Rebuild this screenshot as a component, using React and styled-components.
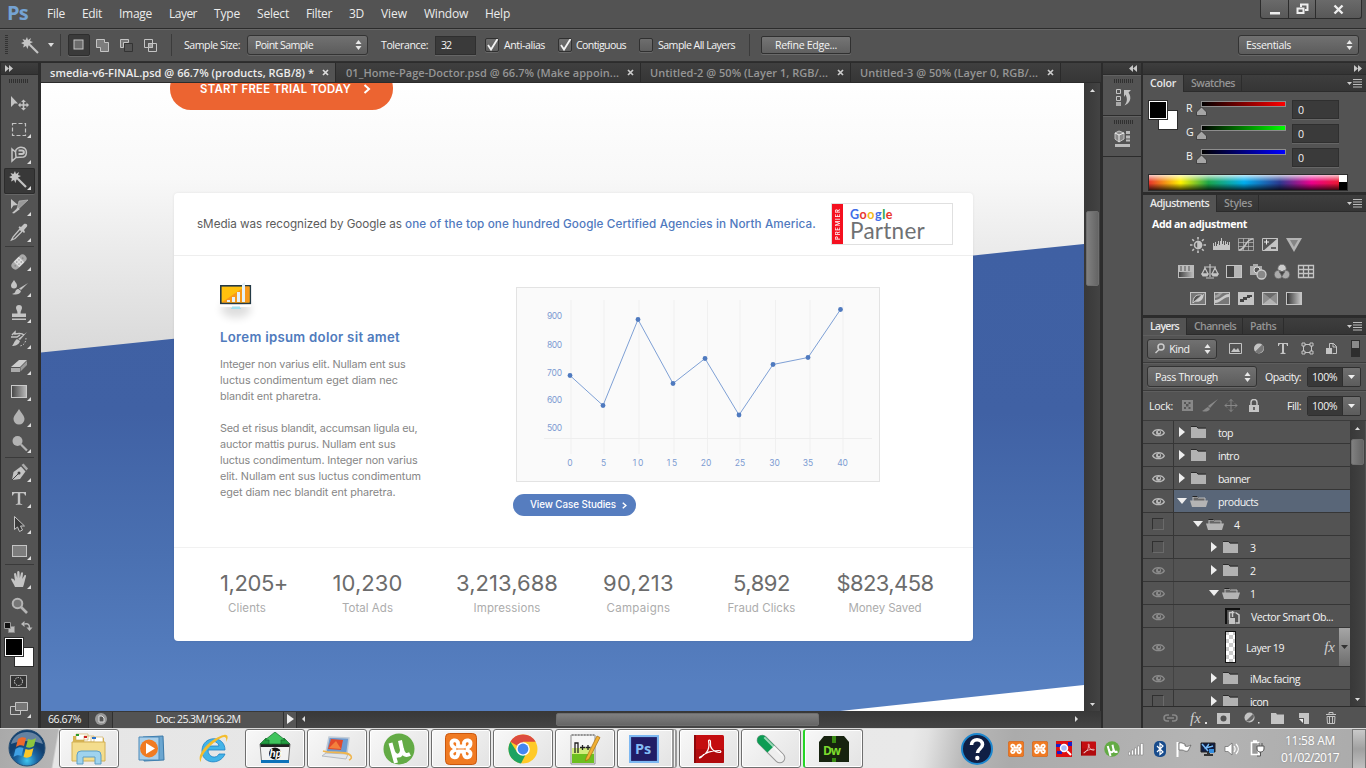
import React, { useLayoutEffect, useRef, useState } from "react";
import styled, { createGlobalStyle, css } from "styled-components";

const Global = createGlobalStyle`
  * { box-sizing: border-box; }
  body { margin: 0; background: #3a3a3a; }
  svg { display: block; flex: none; }
`;

const ui = `"Open Sans", "Noto Sans", sans-serif`;
const geo = `Inter, Lato, sans-serif`;

/* Text tracked so that it fills a given width exactly. */
const Tracked = styled.span`
  display: inline-block;
  flex: none;
  white-space: pre;
  width: ${(p) => p.$w}px;
`;
function Fit({ w, children, ...rest }) {
  const ref = useRef(null);
  const [space, setSpace] = useState(0);
  useLayoutEffect(() => {
    const range = document.createRange();
    range.selectNodeContents(ref.current);
    const natural = range.getBoundingClientRect().width;
    setSpace((w - natural) / ref.current.textContent.length);
  }, [w]);
  return (
    <Tracked ref={ref} $w={w} style={{ letterSpacing: `${space}px` }} {...rest}>
      {children}
    </Tracked>
  );
}

/* ---------- shell ---------- */
const Screen = styled.div`
  width: 1366px;
  height: 768px;
  overflow: hidden;
  display: flex;
  flex-direction: column;
  background: #535353;
  color: #f4f4f4;
  font: 10.6px/14px ${ui};
`;
const MenuBar = styled.header`
  height: 28px;
  flex: none;
  display: flex;
  align-items: center;
  background: #535353;
  padding: 0 4px 0 7px;
  font-size: 12px;
  color: #ececec;
`;
const Logo = styled.div`
  width: 40px;
  font: bold 20px/26px ${ui};
  color: #75a3d3;
  padding-bottom: 2px;
`;
const Menus = styled.nav`
  display: flex;
  gap: 17px;
  flex: 1;
`;
const WindowButtons = styled.div`
  display: flex;
  align-self: flex-start;
  height: 19px;
  border: 1px solid #2c2c2c;
  border-top: 0;
  border-radius: 0 0 3px 3px;
  background: linear-gradient(#6a6a6a, #585858);
`;
const WindowButton = styled.div`
  width: ${(p) => p.$w}px;
  display: flex;
  justify-content: center;
  align-items: center;
  & + & { border-left: 1px solid #2c2c2c; }
`;
const OptionsBar = styled.div`
  height: 34px;
  flex: none;
  display: flex;
  align-items: center;
  border-top: 1px solid #2c2c2c;
  border-bottom: 1px solid #303030;
  box-shadow: inset 0 1px #666;
  padding-left: 5px;
`;
const Gap = styled.i`
  width: ${(p) => p.$w}px;
  flex: none;
`;
const VRule = styled.i`
  width: 1px;
  height: 22px;
  background: #3b3b3b;
  flex: none;
`;
const Selected = styled.div`
  width: 22px;
  height: 22px;
  border-radius: 2px;
  border: 1px solid #2e2e2e;
  background: #3a3a3a;
  box-shadow: 0 1px #686868;
  display: flex;
  align-items: center;
  justify-content: center;
`;
const Select = styled.div`
  width: ${(p) => p.$w}px;
  height: ${(p) => p.$h || 20}px;
  flex: none;
  border: 1px solid #333;
  border-radius: 3px;
  box-shadow: 0 1px #666;
  background: linear-gradient(#717171, #5c5c5c);
  display: flex;
  align-items: center;
  justify-content: space-between;
  padding: 0 5px 0 7px;
`;
const Field = styled.div`
  width: ${(p) => p.$w}px;
  height: ${(p) => p.$h || 19}px;
  flex: none;
  background: #3a3a3a;
  border: 1px solid #2f2f2f;
  box-shadow: 0 1px #666;
  display: flex;
  align-items: center;
  padding-left: 5px;
`;
const CheckBox = styled.div`
  width: 14px;
  height: 14px;
  flex: none;
  border: 1px solid #303030;
  border-radius: 2px;
  background: linear-gradient(#6e6e6e, #5e5e5e);
  box-shadow: 0 1px #686868;
`;
const PushButton = styled.div`
  width: 90px;
  height: 18px;
  border: 1px solid #303030;
  border-radius: 2px;
  background: linear-gradient(#757575, #606060);
  box-shadow: 0 1px #6a6a6a;
  display: flex;
  align-items: center;
  justify-content: center;
`;
const Work = styled.main`
  height: 666px;
  flex: none;
  display: flex;
  background: #2c2c2c;
`;

/* ---------- tools ---------- */
const Tools = styled.aside`
  width: 38px;
  margin: 0 3px 0 0;
  border-left: 1px solid #2c2c2c;
  background: #535353;
  display: flex;
  flex-direction: column;
  align-items: center;
`;
const DarkStrip = styled.div`
  height: 13px;
  width: 100%;
  flex: none;
  background: linear-gradient(#3e3e3e, #343434);
  border-bottom: 1px solid #2c2c2c;
  border-top: 1px solid #2c2c2c;
  display: flex;
  align-items: center;
  padding: 0 4px;
  justify-content: ${(p) => (p.$end ? "flex-end" : "flex-start")};
`;
const Grip = styled.div`
  width: 20px;
  height: 4px;
  flex: none;
  margin: ${(p) => p.$m};
  background: repeating-linear-gradient(90deg, #303030 0 1px, #535353 1px 2px);
`;
const Slot = styled.div`
  width: 31px;
  height: 26px;
  flex: none;
  padding-left: 2px;
  border-radius: 2px;
  ${(p) => p.$on && css`background: #383838; box-shadow: inset 0 0 0 1px #2c2c2c, 0 1px #666;`}
`;
const Sep = styled.div`
  width: 29px;
  height: 3px;
  flex: none;
  border-top: 1px solid #3a3a3a;
`;
const SwatchPair = styled.div`
  position: relative;
  width: ${(p) => p.$s}px;
  height: ${(p) => p.$s}px;
  flex: none;
  margin-left: ${(p) => p.$ml || 0}px;
`;
const Swatch = styled.i`
  position: absolute;
  width: 20px;
  height: 20px;
  border: 1px solid #2c2c2c;
  background: ${(p) => p.$c};
  ${(p) => (p.$front ? "left:0;top:0;box-shadow: inset 0 0 0 1px #fff;" : "right:0;bottom:0;")}
`;

/* ---------- document ---------- */
const Doc = styled.section`
  width: 1060px;
  flex: none;
  display: flex;
  flex-direction: column;
`;
const Tabs = styled.div`
  height: 21px;
  flex: none;
  display: flex;
  border-top: 1px solid #2c2c2c;
  background: linear-gradient(#3f3f3f, #363636);
  border-bottom: 1px solid #2c2c2c;
  font-size: 11px;
`;
const Tab = styled.div`
  width: ${(p) => p.$w}px;
  border-right: 1px solid #2a2a2a;
  padding: 0 6px 0 ${(p) => p.$pl || 9}px;
  display: flex;
  align-items: center;
  justify-content: space-between;
  font-weight: 600;
  background: ${(p) => (p.$on ? "#535353" : "transparent")};
  color: ${(p) => (p.$on ? "#ececec" : "#959595")};
`;
const View = styled.div`
  display: flex;
  height: 628px;
  flex: none;
`;
const Canvas = styled.div`
  width: 1043px;
  flex: none;
  overflow: hidden;
  display: grid;
  background: linear-gradient(#fff 0, #f8f8f8 95px, #ececec 160px, #d9d9d9 270px, #fff 271px);
  & > * { grid-area: 1 / 1; }
`;
const BlueBand = styled.div`
  height: 628px;
  clip-path: polygon(0 269.5px, 1043px 161px, 1043px 602px, 799px 628px, 0 628px);
  background: linear-gradient(#3e5fa2 0, #4061a4 330px, #4a70b1 470px, #567fc0 600px);
`;
const Page = styled.div`
  height: 628px;
  min-width: 0;
  z-index: 1;
  font-family: ${geo};
`;
const Trial = styled.div`
  width: 223px;
  height: 43px;
  margin: -16px 0 83px 129px;
  border-radius: 21px;
  background: #ec6431;
  color: #fff;
  font-size: 11.3px;
  font-weight: 600;
  display: flex;
  align-items: center;
  padding-left: 30px;
  gap: 11px;
`;
const Card = styled.article`
  width: 799px;
  height: 448px;
  margin-left: 133px;
  border-radius: 4px;
  background: #fff;
  box-shadow: 0 0 3px rgba(0, 0, 0, 0.08);
`;
const CardHead = styled.div`
  height: 63px;
  border-bottom: 1px solid #eee;
  display: flex;
  align-items: center;
  padding: 0 20px 0 23px;
  font-size: 11.7px;
  color: #5c5c5c;
`;
const Claim = styled.strong`
  font-weight: 500;
  color: #5079be;
`;
const Partner = styled.div`
  width: 122px;
  height: 42px;
  margin-left: auto;
  border: 1px solid #e0e0e0;
  display: flex;
`;
const Premier = styled.div`
  width: 11px;
  height: 40px;
  background: #f5101f;
  color: #fff;
  font: 500 6px/11px ${geo};
  letter-spacing: 0.8px;
  writing-mode: vertical-rl;
  transform: rotate(180deg);
  text-align: center;
`;
const PartnerText = styled.div`
  padding: 4px 0 0 7px;
  display: flex;
  flex-direction: column;
`;
const Google = styled.div`
  font: 700 12.5px/14px Lato, sans-serif;
  height: 13px;
`;
const Hue = styled.i`
  font-style: normal;
  color: ${(p) => p.$c};
`;
const PartnerWord = styled.div`
  font: 400 22.5px/20px Lato, sans-serif;
  color: #6f7173;
`;
const CardBody = styled.div`
  height: 291px;
  display: flex;
  padding: 29px 0 0 46px;
`;
const Copy = styled.div`
  width: 293px;
`;
const Title = styled.h2`
  margin: 13px 0 11px;
  font: 600 13.2px/18px ${geo};
  color: #4f7bbd;
`;
const Line = styled.div`
  height: 16px;
  font: 400 10.8px/16px ${geo};
  color: #868686;
`;
const ChartColumn = styled.div`
  padding: 2px 0 0 3px;
`;
const CaseButton = styled.div`
  width: 123px;
  height: 22px;
  margin: 12px 0 0 -3px;
  border-radius: 11px;
  background: #567dbf;
  color: #fff;
  font-size: 9.8px;
  font-weight: 500;
  display: flex;
  align-items: center;
  padding-left: 17px;
  gap: 5px;
`;
const Stats = styled.div`
  height: 94px;
  border-top: 1px solid #f1f1f1;
  display: flex;
  padding: 22px 0 0 19px;
`;
const Stat = styled.div`
  width: ${(p) => p.$w}px;
  display: flex;
  flex-direction: column;
  align-items: center;
`;
const Figure = styled.div`
  font: 400 22px/26px ${geo};
  color: #6c6c6c;
  padding-left: ${(p) => p.$shift || 0}px;
`;
const Caption = styled.div`
  font: 400 11.5px/24px ${geo};
  color: #acacac;
  padding-right: ${(p) => p.$shift || 0}px;
`;
const ScrollY = styled.div`
  width: ${(p) => p.$w || 16}px;
  flex: none;
  background: linear-gradient(90deg, #383838, #434343);
  display: flex;
  flex-direction: column;
  align-items: center;
`;
const Thumb = styled.i`
  width: ${(p) => p.$w}px;
  height: ${(p) => p.$h}px;
  flex: none;
  margin: ${(p) => p.$m};
  border-radius: 2px;
  border: 1px solid #6e6e6e;
  background: linear-gradient(${(p) => (p.$flat ? "180deg" : "90deg")}, #808080, #656565);
`;
const Status = styled.div`
  height: 17px;
  flex: none;
  display: flex;
  align-items: center;
  background: linear-gradient(#383838, #444);
`;
const StatusCell = styled.div`
  width: ${(p) => p.$w}px;
  height: 16px;
  padding-bottom: 1px;
  background: ${(p) => p.$bg};
  border-right: 1px solid #303030;
  display: flex;
  align-items: center;
  justify-content: center;
`;

/* ---------- right side ---------- */
const Dock = styled.aside`
  width: 38px;
  margin: 0 2px;
  background: #535353;
  flex: none;
`;
const DockGroup = styled.div`
  height: 41px;
  border-bottom: 1px solid #2c2c2c;
  box-shadow: inset 0 1px #626262;
  padding: 4px 0 0 9px;
`;
const Panels = styled.aside`
  width: 223px;
  flex: none;
  display: flex;
  flex-direction: column;
`;
const Panel = styled.section`
  height: ${(p) => p.$h}px;
  flex: none;
  margin-bottom: 3px;
  background: #535353;
  display: flex;
  flex-direction: column;
  overflow: hidden;
`;
const PanelTabs = styled.div`
  height: 17px;
  flex: none;
  display: flex;
  background: linear-gradient(#3e3e3e, #353535);
  border-bottom: 1px solid #2c2c2c;
`;
const PanelTab = styled.div`
  width: ${(p) => p.$w}px;
  height: ${(p) => (p.$on ? 17 : 16)}px;
  padding: 1px 0 0 7px;
  font-weight: 600;
  line-height: 14px;
  border-right: 1px solid #2c2c2c;
  background: ${(p) => (p.$on ? "#535353" : "transparent")};
  color: ${(p) => (p.$on ? "#e8e8e8" : "#949494")};
`;
const TabsEnd = styled.div`
  margin-left: auto;
  padding: 4px 4px 0 0;
`;
const ColorBody = styled.div`
  padding: 8px 0 0 5px;
  display: flex;
  height: 82px;
`;
const Channels = styled.div`
  padding-left: 8px;
`;
const Channel = styled.div`
  height: 24px;
  display: flex;
`;
const ChannelName = styled.div`
  width: 10px;
  padding-top: 1px;
`;
const Slider = styled.div`
  width: 90px;
`;
const Track = styled.div`
  height: 6px;
  margin: 1px 0 0 5px;
  width: 85px;
  border: 1px solid #8d8d8d;
  background: linear-gradient(90deg, #000, ${(p) => p.$c});
`;
const Spectrum = styled.div`
  margin-left: 5px;
  width: 200px;
  height: 17px;
  border: 1px solid #2c2c2c;
  display: flex;
  background: linear-gradient(rgba(255,255,255,.75), rgba(255,255,255,0) 45%, rgba(0,0,0,0) 55%, rgba(0,0,0,.75)),
    linear-gradient(90deg, #e8352c 0, #fff200 16%, #1ca64a 30%, #00aeef 48%, #2b3990 66%, #ec008c 82%, #ed1c24 98%);
`;
const BlackWhite = styled.i`
  width: 8px;
  margin-left: auto;
  background: linear-gradient(#fff 50%, #000 50%);
`;
const AdjustTitle = styled.div`
  padding: 5px 0 0 9px;
  height: 19px;
  flex: none;
  font-weight: 700;
  color: #fff;
`;
const IconRow = styled.div`
  display: flex;
  gap: 6px;
  height: 27px;
  flex: none;
  align-items: center;
  padding-left: ${(p) => p.$pl}px;
`;
const ControlRow = styled.div`
  height: ${(p) => p.$h}px;
  flex: none;
  display: flex;
  align-items: center;
  padding-left: ${(p) => p.$pl || 4}px;
  border-bottom: 1px solid #3b3b3b;
  box-shadow: inset 0 1px #5e5e5e;
`;
const Percent = styled.div`
  display: flex;
  width: 54px;
  height: 20px;
  border: 1px solid #2f2f2f;
  border-radius: 2px;
  overflow: hidden;
`;
const PercentValue = styled.div`
  width: 34px;
  background: #383838;
  padding: 2px 0 0 4px;
`;
const PercentDrop = styled.div`
  flex: 1;
  background: linear-gradient(#707070, #5c5c5c);
  border-left: 1px solid #2f2f2f;
  display: flex;
  align-items: center;
  justify-content: center;
`;
const LayerArea = styled.div`
  display: flex;
  height: 286px;
  flex: none;
  overflow: hidden;
  border-bottom: 1px solid #2c2c2c;
`;
const LayerList = styled.div`
  width: 207px;
  flex: none;
`;
const LayerRow = styled.div`
  height: ${(p) => p.$h || 23}px;
  display: flex;
  border-bottom: 1px solid #363636;
`;
const EyeCell = styled.div`
  width: 31px;
  border-right: 1px solid #363636;
  padding-left: 9px;
  display: flex;
  align-items: center;
  flex: none;
  opacity: ${(p) => (p.$dim ? 0.55 : 1)};
`;
const EyeBox = styled.i`
  width: 12px;
  height: 12px;
  border: 1px solid #6a6a6a;
  border-top-color: #303030;
  border-left-color: #303030;
`;
const LayerCell = styled.div`
  flex: 1;
  display: flex;
  align-items: center;
  padding-left: ${(p) => p.$pl}px;
  background: ${(p) => (p.$on ? "#596678" : "transparent")};
  color: #f4f4f4;
`;
const LayerName = styled.div`
  padding: 2px 0 0 ${(p) => p.$pl}px;
  flex: 1;
`;
const Fx = styled.i`
  font: italic 15px/18px "Liberation Serif", serif;
  color: #cfcfcf;
  padding-right: 4px;
`;
const FxDrop = styled.div`
  width: 11px;
  align-self: stretch;
  background: linear-gradient(#a5a5a5, #6e6e6e);
  display: flex;
  align-items: center;
  justify-content: center;
`;
const PanelFoot = styled.div`
  height: 21px;
  flex: none;
  display: flex;
  align-items: center;
  padding: 1px 0 0 20px;
`;
const FootIcon = styled.div`
  width: 27px;
  display: flex;
`;

/* ---------- taskbar ---------- */
const TaskBar = styled.footer`
  height: 40px;
  flex: none;
  display: flex;
  border-top: 1px solid #d9d9d9;
  background: linear-gradient(100deg, #a9a9a9 0, #b5b5b5 57px, #e6e6e6 59px, #e9e9e9 900px, #e2e2e2 915px, #b7b7b7 955px, #ababab 1000px, #b4b4b4 1180px, #aaaaaa 1366px);
`;
const Start = styled.div`
  width: 59px;
  padding: 0 0 0 8px;
`;
const Task = styled.div`
  width: 60px;
  height: 39px;
  margin-right: 2px;
  flex: none;
  display: flex;
  align-items: center;
  justify-content: center;
  border-radius: 3px;
  border: 1px solid transparent;
  ${(p) => p.$open && css`
    border-color: #6f6f6f;
    background: linear-gradient(135deg, #f8f8f8, #e3e3e3);
    box-shadow: inset 0 0 0 1px #fff;
  `}
  ${(p) => p.$stack && css`border-right: 5px double #999; padding-right: 2px;`}
  ${(p) => p.$busy && css`border-left: 2px solid #26d626;`}
`;
const Tray = styled.div`
  margin-left: auto;
  display: flex;
  align-items: center;
  height: 39px;
`;
const TrayIcon = styled.div`
  width: 24px;
  display: flex;
  justify-content: center;
`;
const Clock = styled.div`
  width: 84px;
  display: flex;
  flex-direction: column;
  align-items: center;
  font: 12px/17px ${ui};
  color: #fff;
  text-shadow: 0 0 2px #888;
`;
const ShowDesktop = styled.div`
  width: 14px;
  height: 40px;
  border: 1px solid #777;
  background: linear-gradient(#c9c9c9, #a0a0a0 50%, #c0c0c0);
`;

/* ---------- small drawings ---------- */
const G = "#c4c4c4";
const Spin = () => (
  <svg width="7" height="10" fill="#e8e8e8"><path d="M3.5 0L6.5 4H.5zM3.5 10L.5 6h6z" /></svg>
);
const Down = ({ c = "#eee" }) => (
  <svg width="7" height="4" fill={c}><path d="M0 0h7L3.5 4z" /></svg>
);
const Close = ({ c }) => (
  <svg width="7" height="7" stroke={c} strokeWidth="1.7"><path d="M1 1l5 5M6 1L1 6" /></svg>
);
const Chevrons = ({ left }) => (
  <svg width="8" height="7" fill="#c8c8c8">
    <path d={left ? "M4 0v7L0 3.5zM8 0v7L4 3.5z" : "M0 0v7l4-3.5zM4 0v7l4-3.5z"} />
  </svg>
);
const Next = ({ s, w }) => (
  <svg width={s} height={s} viewBox="0 0 8 8" fill="none" stroke="#fff" strokeWidth={w}><path d="M2 .8L5.6 4 2 7.2" /></svg>
);
const PanelMenu = () => (
  <svg width="15" height="9"><path d="M0 3h5L2.500 6z" fill="#ccc" /><path d="M6 .5h9M6 3h9M6 5.500h9M6 8h9" stroke="#bbb" /></svg>
);
const Eye = () => (
  <svg width="13" height="9" viewBox="0 0 13 9">
    <path d="M.7 4.800C3 .6 10 .6 12.300 4.800 10 8.600 3 8.600 .7 4.800z" fill="none" stroke="#b9b9b9" strokeWidth="1.300" />
    <circle cx="6.500" cy="4.500" r="2.500" fill="#b9b9b9" /><circle cx="7" cy="4" r="1" fill="#444" />
  </svg>
);
const Folder = ({ open }) =>
  open ? (
    <svg width="18" height="13"><path d="M3 6V2h4l1 1h7v3" fill="#666" stroke="#bdbdbd" /><path d="M0 5.500h18l-2 6.500H2z" fill="#b4b4b4" /><path d="M2.500 1.500H7l1 1" stroke="#222" fill="none" /></svg>
  ) : (
    <svg width="15" height="13"><path d="M0 1h5.500l1.500 1.500h8V12H0z" fill="#b2b2b2" /><path d="M0 .5h5.500L7 2h8" stroke="#2a2a2a" fill="none" /></svg>
  );
const Twist = ({ open }) => (
  <svg width="10" height="10" fill="#eee"><path d={open ? "M0 2h10L5 8z" : "M2 0v10l6-5z"} /></svg>
);

const Wand = () => (
  <g>
    <path d="M9 3l1 3 3-2-1 3 3 1-3 1.500 1.500 2.500-3-.5L9.500 15 8 12l-3 1.500 1-3-3-1.500 3-1.200L4.500 5l3 1z" fill={G} />
    <path d="M12 11l8 8" stroke={G} strokeWidth="2.200" />
  </g>
);
const toolArt = {
  move: <g fill={G}><path d="M5 6L12 13.500H8.500L5 17z" /><path d="M17.500 9.500l2.500 2.500h-1.700v2.200h2.200v-1.700l2.500 2.500-2.500 2.500v-1.700h-2.200v2.200H20l-2.500 2.500L15 18h1.700v-2.200h-2.200v1.700L12 15l2.500-2.500v1.700h2.200V12H15z" /></g>,
  marquee: <rect x="6.500" y="7.500" width="13" height="12" fill="none" stroke={G} strokeWidth="1.200" strokeDasharray="4 2" />,
  lasso: <g fill="none" stroke={G} strokeWidth="1.500"><path d="M6 7l3.500 3 .5 5.500-4 3.500zM9.500 10c0-4 4-5 7-4.500 5 .8 5 8 1 9.500l-7.500.5" /><path d="M12.500 8.500h3.500c2.500 0 2.500 3.500 0 3.500h-3.500" strokeWidth="2" /></g>,
  wand: <Wand />,
  slice: <g><path d="M5 5v10l2.500-3.500L12 11z" fill={G} /><path d="M22 6l-9 1-2 8 3-1.500z" fill="#999" stroke={G} strokeWidth=".6" /><path d="M12 13.500L6 19l2 .5 6-4.500z" fill={G} /></g>,
  dropper: <g><path d="M14 9l-7 8-1.500 3L9 18.500l7-7z" fill="none" stroke={G} strokeWidth="1.300" /><path d="M12.500 7.500l5.500 5.500 1-1-1-2 3-3.500c1-2-1-3.500-3-2.500L15 7l-1.500-.7z" fill={G} /></g>,
  heal: <g transform="rotate(-45 13 13)"><rect x="4" y="9" width="18" height="8" rx="4" fill="#aaa" /><rect x="9.500" y="9" width="7" height="8" fill="#ddd" /><path d="M11.500 11v1m3-1v1m-3 2v1m3-1v1M7 13h1m10 0h1" stroke="#555" /></g>,
  brush: <g><path d="M8 5c2 3 3 4 3 5.500a3 3 0 01-6 0C5 9 6 8 8 5z" fill={G} /><path d="M22 8l-7 7-2-1.500z" fill={G} /><path d="M12.500 14l2.500 2c-1 4-6 4-9 3 2-.5 3-1 3.500-3 .7-1.500 1.700-2 3-2z" fill={G} /></g>,
  stamp: <g fill={G}><path d="M13 4a3 3 0 013 3c0 1.500-1.500 2.500-1.500 5.500H20V16H6v-3.500h5.500C11.500 9.500 10 8.500 10 7a3 3 0 013-3z" /><path d="M6 17.500h14V19H6z" /></g>,
  history: <g><path d="M6 8l3-3v2c5-1 7-1 9 1M5 10h6l3-2" stroke={G} fill="none" strokeWidth="1.500" /><path d="M21 5l-7 8-2-1z" fill={G} /><path d="M11 12l3 2c-1 4-5 5-8 5 2-2 2-5 5-7z" fill={G} /><path d="M20 11c0 5-3 8-7 8" stroke={G} strokeDasharray="1.500 1.500" fill="none" /></g>,
  eraser: <g><path d="M5 14l8-7h8l-7 7z" fill="#ccc" /><path d="M5 15h9v4H5z" fill="#aaa" /><path d="M14.500 14.500L21 8v4l-6.500 6.500z" fill="#999" /></g>,
  gradient: <rect x="5.500" y="6.500" width="15" height="12" fill="url(#toolShade)" stroke="#c9c9c9" />,
  drop: <path d="M13 4c3 5 5.500 7 5.500 10a5.500 5.500 0 01-11 0C7.500 11 10 9 13 4z" fill="#b3b3b3" />,
  dodge: <g><circle cx="11.500" cy="10" r="5" fill="#b3b3b3" /><path d="M15 13.500l6 6" stroke="#b3b3b3" strokeWidth="2.200" /></g>,
  pen: <g><path d="M6 20l1.500-8L15 6.500l4.500 5L14 19z" fill={G} /><path d="M6 20l6.500-6.500" stroke="#444" /><circle cx="13" cy="13" r="1.500" fill="#444" /><path d="M15.500 5l2-1.500 4.500 5-1.500 2z" fill="#aaa" /></g>,
  type: <path d="M6 6h14v3.500h-1c-.4-1.800-1-2.300-3-2.300h-1.800v9.500c0 1 .5 1.300 2 1.300v.8H9.800V18c1.500 0 2-.3 2-1.300V7.200H10c-2 0-2.600.5-3 2.300H6z" fill={G} />,
  arrow: <path d="M8.500 4.500v13l3-2.500 2 4.500 3-1.500-2-4h4z" fill="#3a3a3a" stroke={G} strokeWidth="1" />,
  rect: <rect x="6.500" y="7.500" width="14" height="11" fill="#7d7d7d" stroke="#c4c4c4" />,
  hand: <path d="M9 20c-1-3-3-5-4-8 1-1 2-.5 4 2L8 7c.5-1.500 2-1 2.200 0l1 4V5c.3-1.500 2-1.500 2.300 0l.3 6 1.200-5c.5-1.300 2-1 2 .4l-.7 5.600 2-3.500c.8-1 2-.4 1.700.8-1 3-1.500 7-3 10.700z" fill={G} />,
  zoom: <g><circle cx="11.500" cy="10.500" r="4.800" fill="#777" stroke="#b5b5b5" strokeWidth="2" /><path d="M15 14l6 6" stroke="#b5b5b5" strokeWidth="2.600" /></g>,
};
const Tool = ({ name, plain }) => (
  <Slot $on={name === "wand"}>
    <svg width="29" height="26">
      {toolArt[name]}
      {!plain && <path d="M25 18v4h-4z" fill="#ddd" />}
    </svg>
  </Slot>
);

const adjust = {
  sun: <g stroke={G} fill="none" strokeWidth="1.600"><circle cx="9" cy="9" r="3.500" /><path d="M9 5.500a3.500 3.500 0 010 7z" fill={G} /><path d="M9 1v2.500M9 14.500V17M1 9h2.500M14.500 9H17M3.300 3.300L5 5M13 13l1.700 1.700M14.700 3.300L13 5M5 13l-1.700 1.700" /></g>,
  levels: <path d="M0 14V7h1v3h1V6h1v4h1V8h1V5h1v4h1V5h1V2h1v6h1V5h1v4h1V5h1v3h1V6h1v3h1V6h1v8z" fill={G} />,
  curves: <g fill="none" stroke={G}><path d="M1.500 2.500h15v12h-15zM1.500 6.500h15M1.500 10.500h15M6.500 2.500v12M11.500 2.500v12" opacity=".65" /><path d="M2 14c7 0 6-11 14-11" strokeWidth="1.600" /></g>,
  exposure: <g><path d="M1.500 2.500h15v12h-15z" fill="#555" stroke={G} /><path d="M2 15L17 2v13z" fill={G} /><path d="M3 6h5M5.500 3.500v5" stroke="#eee" /><path d="M10 12h5" stroke="#444" strokeWidth="1.500" /></g>,
  vibrance: <g><path d="M1 2h16L9 16z" fill="#b4b4b4" /><path d="M5 4h8l-4 7z" fill="#858585" /></g>,
  hue: <g><rect x="1" y="2" width="16" height="13" fill="#bbb" /><path d="M4 3v5M8 3v5M12 3v5" stroke="#777" strokeWidth="1.500" /><rect x="2" y="9" width="14" height="5" fill="url(#toolShade)" /></g>,
  balance: <g stroke={G} fill="none" strokeWidth="1.200"><path d="M9 1v13M5 15h8M3 4h12M4 5l-3 6h6zM14 5l-3 6h6z" /><path d="M1 11h6l-1 2H2zM11 11h6l-1 2h-4z" fill={G} /></g>,
  bw: <g><rect x="1.500" y="2.500" width="15" height="12" fill="#444" stroke={G} /><path d="M9 3h7v11H9z" fill="#b5b5b5" /></g>,
  photo: <g><path d="M1 3h3V1h5v2h4v9H1z" fill="#aaa" /><circle cx="8" cy="7" r="3" fill="#555" stroke="#ddd" /><circle cx="12.500" cy="11.500" r="4.500" fill="#888" stroke="#ccc" strokeWidth="1.300" /></g>,
  mixer: <g stroke="#666" strokeWidth=".8"><circle cx="9" cy="5.500" r="4.200" fill="#ccc" /><circle cx="5.500" cy="11.500" r="4.200" fill="#aaa" /><circle cx="12.500" cy="11.500" r="4.200" fill="#aaa" /><path d="M6 8.500h6L9 13z" fill="#444" /></g>,
  lookup: <g fill="none" stroke={G} strokeWidth="1.300"><path d="M1.500 2.500h15v12h-15zM1.500 6.500h15M1.500 10.500h15M6.500 2.500v12M11.500 2.500v12" /></g>,
  invert: <g><rect x="1.500" y="2.500" width="15" height="12" fill="#777" stroke={G} /><path d="M2 14L16 3c-2 2-1 4-3 6.500-2 2.500-5 2.500-7 2z" fill="#ccc" /><path d="M4 13c0-5 2-9 9-8z" fill="#555" stroke="#ccc" /></g>,
  poster: <g><rect x="1.500" y="2.500" width="15" height="12" fill="#777" stroke={G} /><path d="M2 10c6 0 8-6 14-6v3c-6 0-8 6-14 6z" fill="#c8c8c8" /><path d="M2 8c4 0 6-4 8-5H6C5 4 4 5 2 5.500z" fill="#a0a0a0" /></g>,
  threshold: <g><rect x="1.500" y="2.500" width="15" height="12" fill="#c4c4c4" stroke={G} /><path d="M3 9h3V7h4V5h5v2h-2v1h-3v2H7v2H3z" fill="#444" /></g>,
  selective: <g><rect x="1.500" y="2.500" width="15" height="12" fill="#b4b4b4" stroke={G} /><path d="M2 3l7 5.500L2 14zM16 3L9 8.500l7 5.500z" fill="#8d8d8d" /><path d="M2 3h14L9 8.500z" fill="#6b6b6b" /></g>,
  map: <rect x="1.500" y="2.500" width="15" height="12" fill="url(#mapShade)" stroke={G} />,
};
const Adjust = ({ names, pl }) => (
  <IconRow $pl={pl}>{names.map((n) => <svg key={n} width="18" height="18">{adjust[n]}</svg>)}</IconRow>
);

const Xampp = ({ s }) => (
  <svg width={s} height={s} viewBox="0 0 32 32">
    <rect x=".5" y=".5" width="31" height="31" rx="4" fill="#f07a22" stroke="#c9570f" />
    <path d="M13 9.500C11 6 6 7 6.500 11c.2 2 1.500 3 3 3.500v3c-2 .5-3.500 2-3 4 .5 3.500 5.500 4 6.500 0v-3h6v3c1 4 6 3.500 6.500 0 .5-2-1-3.500-3-4v-3c1.500-.5 2.800-1.500 3-3.500.5-4-4.500-5-6.500-1.500v4h-6z" fill="none" stroke="#fff" strokeWidth="3.800" strokeLinejoin="round" />
  </svg>
);
const Mu = ({ s }) => (
  <svg width={s} height={s} viewBox="0 0 32 32">
    <circle cx="16" cy="16" r="15.500" fill="#63ab45" />
    <path d="M7.500 10l5.500 20M9.500 17c2 8 9 7 9.500 0L17 7.500M19 16c1 6 4 7 8 5" fill="none" stroke="#fff" strokeWidth="4" />
  </svg>
);
const Acrobat = ({ s }) => (
  <svg width={s} height={s} viewBox="0 0 30 28">
    <rect width="30" height="28" rx="1.500" fill="#c40d10" /><path d="M0 0h2v28H0z" fill="#8d0609" /><path d="M2 14h28v14H2z" fill="#a5090b" opacity=".6" />
    <path d="M6 22c7-3 10-9 8.500-16 0-1.500 2.500-1.500 2 2-1 5 3.500 9.500 9 9.500 2 0 2-2-1-2-7 0-14 2.500-16.500 6-1.500 2-3.500 1.500-2 .5z" fill="none" stroke="#fff" strokeWidth="1.200" />
  </svg>
);

const taskIcons = {
  explorer: <svg width="36" height="34"><path d="M2 8V4h14l2 2h15v22H2z" fill="#d8b552" /><path d="M5 2h12v6H5zM13 4h10v6H13zM20 5h12v6H20z" fill="#fff" stroke="#caa54d" strokeWidth=".6" /><path d="M5 2h3v2H5z" fill="#2a9c2a" /><path d="M13 4h3v2h-3z" fill="#c22" /><path d="M21 5h4v2h-4z" fill="#2a72cc" /><path d="M1 10h33v19H1z" fill="#f4dd8d" stroke="#d2b054" /><path d="M6 32V23q0-4 4-4h16q4 0 4 4v9h-6v-7H12v7z" fill="#9fd3ee" stroke="#5f9fc4" /></svg>,
  player: <svg width="30" height="30"><path d="M7 3l20-1 1 24-20 1z" fill="#6ba6d0" stroke="#3978a8" /><path d="M3 3h20v23H3z" fill="#a9cfea" stroke="#4a89b8" /><circle cx="13" cy="14.500" r="9" fill="#f07b22" /><path d="M10 9l9 5.500-9 5.500z" fill="#fff" /></svg>,
  ie: <svg width="34" height="34"><path d="M29 18H12c0 8 9 9 11 4h6c-5 12-24 10-23-4C7 3 29 3 29 18zM12 14h11c-1-6-10-6-11 0z" fill="#43b4e8" stroke="#1d82c4" strokeWidth=".8" /><path d="M5 30C-1 24 14 6 28 3c5-1 4 4 2 7 1-5-1-6-5-4C15 11 4 24 5 30z" fill="#f4bd2d" /></svg>,
  hp: <svg width="34" height="34"><path d="M3 12h28v16H3z" fill="#f2f2f2" /><path d="M2 12h30v3H2z" fill="#222" /><path d="M2 12l1.500 17M32 12l-1.500 17" stroke="#777" /><path d="M3 28h28v3H3z" fill="#0d72b9" /><path d="M2 12l6-6 6 6zM20 12l6-6 6 6z" fill="#239b40" stroke="#116a28" strokeWidth=".7" /><path d="M17 0l10 8h-4v4H11V8H7z" fill="#3fc45c" stroke="#116a28" strokeWidth=".7" /><circle cx="17" cy="21.500" r="6" fill="#151515" /><text x="11.500" y="25" fontSize="10" fontStyle="italic" fontWeight="bold" fill="#fff" fontFamily="Liberation Sans, sans-serif">hp</text></svg>,
  laptop: <svg width="34" height="26"><path d="M9 1l20 1-2 15-21-1z" fill="#6d9ad0" stroke="#c2ccd6" strokeWidth="1.500" /><path d="M11 3l12 1-2 10-13-1z" fill="#e2492b" /><path d="M9 12l7-7 5 8z" fill="#f4803c" /><path d="M6 17l22 1-2 5-24-3z" fill="#e3e6ea" stroke="#b5bac2" /><path d="M3 15c8 3 24-1 28 5 1 2 0 3-2 4" fill="none" stroke="#efb54e" strokeWidth="1.600" /></svg>,
  torrent: <Mu s="32" />,
  xampp: <Xampp s="32" />,
  chrome: <svg width="30" height="30"><circle cx="15" cy="15" r="14.500" fill="#ffca28" /><path d="M15 15L2.400 7.700A14.500 14.500 0 0127.600 7.700H15z" fill="#dd4b3e" /><path d="M2.400 7.700A14.500 14.500 0 0013 29.400L19 18l-4-3-6 3z" fill="#1da362" /><circle cx="15" cy="15" r="6.800" fill="#fff" /><circle cx="15" cy="15" r="5.400" fill="#4587f0" /></svg>,
  npp: <svg width="32" height="34"><path d="M2 3h24v29H2z" fill="#f6f6f6" stroke="#8d8d8d" /><path d="M3 16h22v15H3z" fill="#d3ee7c" /><path d="M3 22h22v9H3z" fill="#6cbf1f" /><path d="M3 3h22" stroke="#666" strokeDasharray="1.500 1.500" /><path d="M6 21V11h3v10M11 15.500h5M13.500 13v5M16.500 15.500h5M19 13v5" stroke="#222" fill="none" strokeWidth="1.300" /><path d="M17 26L28 4l3 1.500L20 27l-3.500 2z" fill="#f1b033" stroke="#a56e12" strokeWidth=".7" /></svg>,
  ps: <svg width="30" height="28"><rect x="1" y="1" width="28" height="26" fill="#211d66" stroke="#7db8f2" strokeWidth="2.200" /><text x="6" y="19" fontSize="14.500" fontWeight="bold" fill="#85bdf5" fontFamily="Open Sans, sans-serif">Ps</text></svg>,
  acrobat: <Acrobat s="30" />,
  pill: <svg width="32" height="32"><g transform="rotate(45 16 16)"><rect x="-1.500" y="11" width="35" height="10" rx="5" fill="#eee" stroke="#999" /><path d="M16 11H3.500a5 5 0 000 10H16z" fill="#0c9c53" /><path d="M3 12.500h26" stroke="#fff" opacity=".6" strokeWidth="2" /></g></svg>,
  dw: <svg width="30" height="28"><path d="M5 1h20l5 6v20H0V7z" fill="#17230f" /><path d="M13 1h4v7h-4zM13 23h4v4h-4z" fill="#398a12" /><text x="4" y="20" fontSize="12" fontWeight="bold" fill="#7ddb2e" fontFamily="Open Sans, sans-serif" textLength="18">Dw</text></svg>,
};
const tasks = [["explorer", 1], ["player"], ["ie"], ["hp", 1], ["laptop", 1], ["torrent", 1], ["xampp", 1], ["chrome", 1], ["npp", 1], ["ps", 1, 1], ["acrobat", 1], ["pill", 1], ["dw", 1]];

const trayIcons = [
  <Xampp s="16" />, <Xampp s="16" />,
  <svg width="16" height="16"><path d="M0 0h16v16H0z" fill="#e01010" /><path d="M0 3h5v3H0zM12 1h4v4h-4zM1 10h5v3H1z" fill="#1c1cc8" /><circle cx="8" cy="7" r="3.500" fill="#a9bdf8" stroke="#fff" strokeWidth="1.500" /><path d="M11 10l4 4" stroke="#fff" strokeWidth="2" /></svg>,
  <Acrobat s="15" />, <Mu s="16" />,
  <svg width="16" height="14" fill="#fff" stroke="#777" strokeWidth=".5"><path d="M.5 10h2v3h-2zM3.500 8h2v5h-2zM6.500 6h2v7h-2zM9.500 4h2v9h-2zM12.500 1.500h2.500V13h-2.500z" /></svg>,
  <svg width="12" height="16"><rect width="12" height="16" rx="5" fill="#174b8c" /><path d="M3 5l6 6-3 2.500v-11L9 5l-6 6" fill="none" stroke="#fff" strokeWidth="1.200" /></svg>,
  <svg width="16" height="16"><path d="M1.500 1v15" stroke="#fff" strokeWidth="2" /><path d="M3 2c3-1 4 1 6 1v2c2 1 4 0 6-1l-3 6c-3 1-4-1-6-1H3z" fill="#fff" stroke="#555" strokeWidth=".7" /></svg>,
  <svg width="16" height="16"><path d="M1 2h14v9H1z" fill="#101d42" stroke="#222" /><path d="M2 3l6 7M9 3l-3 4 7-2" stroke="#75b8f4" strokeWidth="1.500" /><path d="M7 11h3v2h3v2H4v-2h3z" fill="#333" /><path d="M9 8h5v4H9z" fill="#358ddd" /></svg>,
  <svg width="16" height="16"><path d="M1 5.500h3L8 2v12l-4-3.500H1z" fill="#fff" stroke="#666" strokeWidth=".7" /><path d="M10 5c1.500 2 1.500 4 0 6M12 3c3 3 3 7 0 10" fill="none" stroke="#fff" strokeWidth="1.200" /></svg>,
  <svg width="17" height="17"><path d="M3.500 2.500h7v12h-7zM5 1h4" fill="#999" stroke="#fff" strokeWidth="1.600" /><path d="M9 6h7v3c0 2-2 3-3.500 3S9 11 9 9zM11 3v3M14 3v3M12.500 12v4H9" fill="#fff" stroke="#555" /></svg>,
];

const layers = [
  ["top", 15, 0, "closed", "on"], ["intro", 21, 0, "closed", "on"], ["banner", 32, 0, "closed", "on"],
  ["products", 40, 0, "open", "on"], ["4", 6, 1, "open", "off"], ["3", 6, 2, "closed", "off"],
  ["2", 6, 2, "closed", "dim"], ["1", 6, 2, "open", "dim"], ["Vector Smart Ob...", 82, 2, "smart", "dim"],
  ["Layer 19", 38, 2, "pixel", "dim"], ["iMac facing", 50, 2, "closed", "dim"], ["icon", 18, 2, "closed", "off"],
];
function Layer({ row: [name, w, depth, kind, eye] }) {
  const folder = kind === "open" || kind === "closed";
  return (
    <LayerRow $h={kind === "pixel" ? 39 : 23}>
      <EyeCell $dim={eye === "dim"}>{eye === "off" ? <EyeBox /> : <Eye />}</EyeCell>
      <LayerCell $on={name === "products"} $pl={folder ? 3 + depth * 16 : 51}>
        {folder && <Twist open={kind === "open"} />}
        {folder && <Gap $w={kind === "open" ? 3 : 4} />}
        {folder && <Folder open={kind === "open"} />}
        {kind === "smart" && (
          <svg width="16" height="17"><path d="M1 16V1h14" fill="none" stroke="#111" strokeWidth="2" /><path d="M4.500 12V4.500h5M7.500 9V3" fill="none" stroke="#ccc" strokeWidth="1.500" /><path d="M10.500 4.500l3.500 2.500v8h-3.500" fill="none" stroke="#ccc" strokeWidth="1.500" /><path d="M4 10h6v6H4z" fill="#c4c4c4" /></svg>
        )}
        {kind === "pixel" && (
          <svg width="11" height="32"><rect width="11" height="32" fill="url(#checks)" stroke="#111" strokeWidth="2" /></svg>
        )}
        <LayerName $pl={kind === "closed" ? 12 : 10}><Fit w={w}>{name}</Fit></LayerName>
        {kind === "pixel" && <Fx>fx</Fx>}
        {kind === "pixel" && <FxDrop><Down c="#333" /></FxDrop>}
      </LayerCell>
    </LayerRow>
  );
}

const pts = [[54, 88.500], [87, 118.500], [122, 32.500], [157, 96.500], [189, 71.500], [223, 128], [257, 77.500], [292, 70.500], [324.500, 22.500]];
const gridX = [55, 88, 123, 158, 191.500, 224, 259.500, 294, 327];
const axisX = [54, 87.500, 122, 156, 190, 224, 258.500, 292, 326.500];
const Chart = () => (
  <svg width="364" height="195" fontFamily="Inter, sans-serif" fontSize="8.500" fill="#7d9cd2">
    <rect x=".5" y=".5" width="363" height="194" fill="#fafafa" stroke="#e3e3e3" />
    {gridX.map((x) => <path key={x} d={`M${x} 13V167`} stroke="#f0f0f0" />)}
    <path d="M28 151.500H356" stroke="#eee" />
    {[28.5, 57.500, 85.500, 113, 140.500].map((y, i) => <text key={y} x="31" y={y + 3.200} textLength="15">{900 - i * 100}</text>)}
    {axisX.map((x, i) => <text key={x} x={x} y="178.500" textAnchor="middle" textLength={i < 2 ? 5 : 10.5}>{i * 5}</text>)}
    <polyline points={pts.join(" ")} fill="none" stroke="#6f95d0" strokeWidth=".9" />
    {pts.map(([x, y]) => <circle key={x} cx={x} cy={y} r="2.400" fill="#4f7abf" />)}
  </svg>
);

const lines = [
  [185.5, "Integer non varius elit. Nullam ent sus"], [178, "luctus condimentum eget diam nec"], [101, "blandit ent pharetra."], null,
  [197.5, "Sed et risus blandit, accumsan ligula eu,"], [175.5, "auctor mattis purus. Nullam ent sus"], [197.5, "luctus condimentum. Integer non varius"],
  [201, "elit. Nullam ent sus luctus condimentum"], [175.5, "eget diam nec blandit ent pharetra."],
];
const stats = [
  [116, "1,205+", 68, "Clients", 38, 6], [117, "10,230", 70, "Total Ads", 51], [162, "3,213,688", 102, "Impressions", 67],
  [101, "90,213", 71, "Campaigns", 64], [145, "5,892", 57, "Fraud Clicks", 68], [102, "$823,458", 97, "Money Saved", 73],
];
const menus = [["File", 18], ["Edit", 20], ["Image", 33], ["Layer", 28], ["Type", 26], ["Select", 32], ["Filter", 26], ["3D", 15], ["View", 26], ["Window", 44], ["Help", 25]];

export default function App() {
  return (
    <Screen>
      <Global />
      <MenuBar>
        <Logo><Fit w={21}>Ps</Fit></Logo>
        <Menus>{menus.map(([t, w]) => <Fit key={t} w={w}>{t}</Fit>)}</Menus>
        <WindowButtons>
          <WindowButton $w={27}><svg width="12" height="12"><path d="M1 9h10v2.500H1z" fill="#eee" /></svg></WindowButton>
          <WindowButton $w={27}><svg width="13" height="12" fill="none" stroke="#eee" strokeWidth="2"><path d="M5 4V1.500h6.500V7H9M1.500 5.500h6V10h-6z" /></svg></WindowButton>
          <WindowButton $w={46}><svg width="12" height="11" stroke="#eee" strokeWidth="2.400"><path d="M1.500 1.500l8 8M9.500 1.500l-8 8" /></svg></WindowButton>
        </WindowButtons>
      </MenuBar>

      <OptionsBar>
        <svg width="3" height="20"><path d="M1.500 0v20" stroke="#333" strokeWidth="3" strokeDasharray="1 1" /></svg>
        <Gap $w={11} />
        <svg width="23" height="23" viewBox="1 0 23 23"><Wand /></svg>
        <Gap $w={6} />
        <svg width="6" height="4" fill="#ddd"><path d="M0 0h6L3 4z" /></svg>
        <Gap $w={6} /><VRule /><Gap $w={7} />
        <Selected><svg width="12" height="12"><rect x="1" y="1" width="9" height="9" fill="#6b6b6b" stroke="#c4c4c4" /></svg></Selected>
        <Gap $w={6} />
        <svg width="13" height="13"><path d="M.5.500h8v3h4v9h-8v-4h-4z" fill="#7d7d7d" stroke={G} /></svg>
        <Gap $w={11} />
        <svg width="13" height="13" fill="none"><path d="M4.500 4.500h8v8h-8z" stroke="#333" /><path d="M.5.500h8v3h-5v5h-3z" fill="#777" stroke={G} /></svg>
        <Gap $w={11} />
        <svg width="13" height="13" fill="none" stroke={G}><path d="M.5.500h8v8h-8zM4.500 4.500h8v8h-8z" /><path d="M4.500 4.500h4v4h-4z" fill="#999" /></svg>
        <Gap $w={14} /><VRule /><Gap $w={12} />
        <Fit w={56}>Sample Size:</Fit><Gap $w={7} />
        <Select $w={121}><Fit w={58}>Point Sample</Fit><Spin /></Select>
        <Gap $w={13} /><Fit w={47}>Tolerance:</Fit><Gap $w={7} />
        <Field $w={41}><Fit w={10}>32</Fit></Field><Gap $w={9} />
        <CheckBox><svg width="14" height="13" fill="none" stroke="#f2f2f2" strokeWidth="1.800"><path d="M2 6l3 4.500L11.500 0" /></svg></CheckBox><Gap $w={5} /><Fit w={41}>Anti-alias</Fit><Gap $w={13} />
        <CheckBox><svg width="14" height="13" fill="none" stroke="#f2f2f2" strokeWidth="1.800"><path d="M2 6l3 4.500L11.500 0" /></svg></CheckBox><Gap $w={4} /><Fit w={50}>Contiguous</Fit><Gap $w={13} />
        <CheckBox /><Gap $w={5} /><Fit w={77}>Sample All Layers</Fit>
        <Gap $w={14} /><VRule /><Gap $w={11} />
        <PushButton><Fit w={62}>Refine Edge...</Fit></PushButton>
        <Gap $w={387} />
        <Select $w={121}><Fit w={45}>Essentials</Fit><Spin /></Select>
      </OptionsBar>

      <Work>
        <Tools>
          <DarkStrip><Chevrons /></DarkStrip>
          <Grip $m="4px 0 7px -1px" />
          {["move", "marquee", "lasso", "wand", "slice", "dropper"].map((n) => <Tool key={n} name={n} plain={n === "move"} />)}
          <Sep />
          {["heal", "brush", "stamp", "history", "eraser", "gradient", "drop", "dodge"].map((n) => <Tool key={n} name={n} />)}
          <Sep />
          {["pen", "type", "arrow", "rect"].map((n) => <Tool key={n} name={n} />)}
          <Sep />
          {["hand", "zoom"].map((n) => <Tool key={n} name={n} plain={n === "zoom"} />)}
          <svg width="33" height="18">
            <path d="M5.500 7.500h6v6h-6z" fill="#bbb" stroke="#888" /><path d="M1.500 3.500h6v6h-6z" fill="#111" stroke="#999" />
            <path d="M21.500 5c4-1 5 1 5 4" stroke="#bbb" strokeWidth="1.400" fill="none" /><path d="M18 5l3.500-3v6zM23.500 8.500h6l-3 3.500z" fill="#bbb" />
          </svg>
          <SwatchPair $s={30} $ml={-1}><Swatch $c="#fff" /><Swatch $front $c="#000" /></SwatchPair>
          <svg width="31" height="54" viewBox="1 1 31 54">
            <rect x="7.500" y="9.500" width="16" height="12" fill="#333" stroke="#aaa" /><circle cx="15.500" cy="15.500" r="4" fill="none" stroke="#eee" strokeDasharray="1.300 1.200" />
            <path d="M7.500 40.500h10v8h-10z" fill="#555" stroke={G} /><path d="M12.500 36.500h12v8h-12z" fill="#777" stroke={G} /><path d="M28 48v4h-4z" fill="#ddd" />
          </svg>
        </Tools>

        <Doc>
          <Tabs>
            <Tab $on $w={295}><Fit w={264}>smedia-v6-FINAL.psd @ 66.7% (products, RGB/8) *</Fit><Close c="#ddd" /></Tab>
            <Tab $w={305} $pl={10}><Fit w={273}>01_Home-Page-Doctor.psd @ 66.7% (Make appoin...</Fit><Close c="#ccc" /></Tab>
            <Tab $w={210}><Fit w={178}>Untitled-2 @ 50% (Layer 1, RGB/...</Fit><Close c="#ccc" /></Tab>
            <Tab $w={210}><Fit w={178}>Untitled-3 @ 50% (Layer 0, RGB/...</Fit><Close c="#ccc" /></Tab>
          </Tabs>
          <View>
            <Canvas>
              <BlueBand />
              <Page>
                <Trial><Fit w={151}>START FREE TRIAL TODAY</Fit><Next s={10} w={1.6} /></Trial>
                <Card>
                  <CardHead>
                    <Fit w={208}>sMedia was recognized by Google as </Fit>
                    <Claim><Fit w={411}>one of the top one hundred Google Certified Agencies in North America.</Fit></Claim>
                    <Partner>
                      <Premier>PREMIER</Premier>
                      <PartnerText>
                        <Google><Fit w={43}><Hue $c="#3f6ee8">G</Hue><Hue $c="#e8352e">o</Hue><Hue $c="#f3b916">o</Hue><Hue $c="#3f6ee8">g</Hue><Hue $c="#27a550">l</Hue><Hue $c="#e8352e">e</Hue></Fit></Google>
                        <PartnerWord><Fit w={75}>Partner</Fit></PartnerWord>
                      </PartnerText>
                    </Partner>
                  </CardHead>
                  <CardBody>
                    <Copy>
                      <svg width="50" height="30" viewBox="0 0 50 30" overflow="visible">
                        <defs>
                          <linearGradient id="toolShade"><stop stopColor="#444" /><stop offset="1" stopColor="#bbb" /></linearGradient>
                          <linearGradient id="mapShade"><stop stopColor="#333" /><stop offset="1" stopColor="#ccc" /></linearGradient>
                          <pattern id="checks" width="8" height="8" patternUnits="userSpaceOnUse"><path d="M0 0h8v8H0z" fill="#fff" /><path d="M0 0h4v4H0zM4 4h4v4H4z" fill="#ccc" /></pattern>
                          <filter id="soft" x="-50%" y="-50%" width="200%" height="200%"><feGaussianBlur stdDeviation="4" /></filter>
                        </defs>
                        <ellipse cx="16" cy="24" rx="15" ry="9" fill="#000" opacity=".13" filter="url(#soft)" />
                        <path d="M0 20h31v2H0z" fill="#fff" /><path d="M12 21.500h8v1.500h1v1H11v-1h1z" fill="#9fe0f0" />
                        <rect x=".8" y=".8" width="29.500" height="17.500" fill="#ffc10e" stroke="#243a46" strokeWidth="1.600" />
                        <path d="M1.600 17.500L25 1.600h4.500v16z" fill="#f7981d" />
                        <path d="M7 15h3v2H7zM12 12h3v5h-3zM17 7h3v10h-3zM22-1l3-2v20h-3z" fill="#e4f1fa" />
                      </svg>
                      <Title><Fit w={180}>Lorem ipsum dolor sit amet</Fit></Title>
                      {lines.map((l, i) => <Line key={i}>{l && <Fit w={l[0]}>{l[1]}</Fit>}</Line>)}
                    </Copy>
                    <ChartColumn>
                      <Chart />
                      <CaseButton><Fit w={86}>View Case Studies</Fit><Next s={7} w={1.6} /></CaseButton>
                    </ChartColumn>
                  </CardBody>
                  <Stats>
                    {stats.map(([w, n, nw, t, tw, shift]) => (
                      <Stat key={t} $w={w}><Figure $shift={shift}><Fit w={nw}>{n}</Fit></Figure><Caption $shift={shift && 8}><Fit w={tw}>{t}</Fit></Caption></Stat>
                    ))}
                  </Stats>
                </Card>
              </Page>
            </Canvas>
            <ScrollY>
              <svg width="7" height="12" fill="#ddd"><path d="M1 9h5L3.500 6z" /></svg>
              <Thumb $w={13} $h={75} $m="116px 0 413px" />
              <svg width="7" height="12" fill="#ddd"><path d="M1 4h5L3.500 7z" /></svg>
            </ScrollY>
          </View>
          <Status>
            <StatusCell $w={48} $bg="#3a3a3a"><Fit w={33}>66.67%</Fit></StatusCell>
            <StatusCell $w={24} $bg="#4a4a4a"><svg width="12" height="12"><circle cx="6" cy="6" r="6" fill="#999" /><path d="M4 3h3l2 2v4H4z" fill="#555" stroke="#ddd" /></svg></StatusCell>
            <StatusCell $w={171} $bg="#535353"><Fit w={85}>Doc: 25.3M/196.2M</Fit></StatusCell>
            <StatusCell $w={13} $bg="#555"><svg width="7" height="10" fill="#eee"><path d="M0 0v10l7-5z" /></svg></StatusCell>
            <Gap $w={4} />
            <svg width="5" height="7" fill="#ddd"><path d="M4 0v6L1 3z" /></svg>
            <Thumb $flat $w={263} $h={13} $m="0 255px 0 250px" />
            <svg width="6" height="7" fill="#ddd"><path d="M1 0v6l3-3z" /></svg>
          </Status>
        </Doc>

        <Dock>
          <DarkStrip $end><Chevrons left /></DarkStrip>
          <DockGroup>
            <Grip $m="0 0 6px 2px" />
            <svg width="22" height="22"><path d="M4.500.500h4v4h-4zM4.500 7.500h4v4h-4z" fill="none" stroke={G} /><path d="M4 13h5v4H4z" fill="#aaa" /><path d="M12 1h7l-2.500 2.500c4 6 1 11-4 13 3-4 3-7 1-11L12 8z" fill={G} /></svg>
          </DockGroup>
          <DockGroup>
            <Grip $m="0 0 6px 2px" />
            <svg width="22" height="22"><path d="M7 1l5 2v6l-5 3-4-3V3z" fill="#888" stroke={G} /><path d="M3 3l4 2 5-2M7 5v7" stroke="#eee" fill="none" /><path d="M14 1h4v3h-4zM14 5.500h4v3h-4zM14 9.500h4v2h-4zM3 14h15v3H3z" fill="#bbb" /></svg>
          </DockGroup>
        </Dock>

        <Panels>
          <DarkStrip $end><Chevrons /></DarkStrip>
          <Panel $h={117}>
            <PanelTabs>
              <PanelTab $on $w={41}><Fit w={26}>Color</Fit></PanelTab><PanelTab $w={58}><Fit w={44}>Swatches</Fit></PanelTab>
              <TabsEnd><PanelMenu /></TabsEnd>
            </PanelTabs>
            <ColorBody>
              <SwatchPair $s={30}><Swatch $c="#fff" /><Swatch $front $c="#000" /></SwatchPair>
              <Channels>
                {[["R", "#f00"], ["G", "#0f0"], ["B", "#00f"]].map(([n, c]) => (
                  <Channel key={n}>
                    <ChannelName>{n}</ChannelName>
                    <Slider><Track $c={c} /><svg width="11" height="9"><path d="M5.500 0L10.500 5v3.500H.5V5z" fill="#a5a5a5" stroke="#333" strokeWidth=".8" /></svg></Slider>
                    <Gap $w={6} />
                    <Field $w={47}>0</Field>
                  </Channel>
                ))}
              </Channels>
            </ColorBody>
            <Spectrum><BlackWhite /></Spectrum>
          </Panel>
          <Panel $h={120}>
            <PanelTabs>
              <PanelTab $on $w={74}><Fit w={59}>Adjustments</Fit></PanelTab><PanelTab $w={42}><Fit w={28}>Styles</Fit></PanelTab>
              <TabsEnd><PanelMenu /></TabsEnd>
            </PanelTabs>
            <AdjustTitle><Fit w={95}>Add an adjustment</Fit></AdjustTitle>
            <Adjust pl={46} names={["sun", "levels", "curves", "exposure", "vibrance"]} />
            <Adjust pl={34} names={["hue", "balance", "bw", "photo", "mixer", "lookup"]} />
            <Adjust pl={46} names={["invert", "poster", "threshold", "selective", "map"]} />
          </Panel>
          <Panel $h={410}>
            <PanelTabs>
              <PanelTab $on $w={44}><Fit w={29}>Layers</Fit></PanelTab><PanelTab $w={56}><Fit w={42}>Channels</Fit></PanelTab><PanelTab $w={41}><Fit w={26}>Paths</Fit></PanelTab>
              <TabsEnd><PanelMenu /></TabsEnd>
            </PanelTabs>
            <ControlRow $h={28}>
              <Select $w={70}>
                <svg width="10" height="11" fill="none" stroke="#ccc" strokeWidth="1.500"><circle cx="6" cy="4" r="3" /><path d="M4 6.500L.5 10" /></svg>
                <Fit w={20}>Kind</Fit><Gap $w={6} /><Spin />
              </Select>
              <Gap $w={12} />
              <svg width="122" height="14" fill="none" stroke={G}>
                <path d="M.5 1.500h12v10H.5z" /><path d="M2 10l3-4 2 2 2-2 2 4z" fill={G} stroke="none" />
                <circle cx="30" cy="6.500" r="5" fill={G} stroke="none" /><path d="M26.500 10l7-7" stroke="#555" /><path d="M33.500 3a5 5 0 01-7 7z" fill="#777" stroke="none" />
                <path d="M49 1h10v3h-1c0-1.500-.5-2-2-2h-1v8c0 .7.400 1 1.500 1v1h-5v-1c1 0 1.500-.3 1.500-1V2h-1c-1.500 0-2 .5-2 2h-1z" fill={G} stroke="none" />
                <path d="M74.500 2.500h8v8h-8z" /><path d="M73 1h3v3h-3zM81 1h3v3h-3zM73 9h3v3h-3zM81 9h3v3h-3z" fill="#535353" />
                <path d="M100.500 6V1.500h4l3 3v7h-4M104 1v4h4" /><path d="M97 6h6v6h-6z" fill={G} stroke="none" />
              </svg>
              <svg width="9" height="17"><path d="M0 0h9v17H0z" fill="#2e2e2e" /><path d="M1 1h7v7H1z" fill="#8a8a8a" /></svg>
            </ControlRow>
            <ControlRow $h={28}>
              <Select $w={110} $h={21}><Fit w={63}>Pass Through</Fit><Spin /></Select>
              <Gap $w={8} /><Fit w={36}>Opacity:</Fit><Gap $w={6} />
              <Percent><PercentValue><Fit w={25}>100%</Fit></PercentValue><PercentDrop><Down /></PercentDrop></Percent>
            </ControlRow>
            <ControlRow $h={30} $pl={6}>
              <Fit w={24}>Lock:</Fit><Gap $w={9} />
              <svg width="78" height="14">
                <path d="M0 1h11v11H0z" fill="#888" /><path d="M2 3h2v2H2zM6.500 3h2v2h-2zM4 5h2.500v2.500H4zM2 8h2v2H2zM6.500 8h2v2h-2z" fill="#555" />
                <path d="M36 0l-8 9-2-2zM26 8l2 2c-2 3-5 3-8 2 3-1 3-3 6-4z" fill="#888" />
                <path d="M49 .5v12M43 6.500h12M47 2.500l2-2 2 2M47 10.500l2 2 2-2M45 4.500l-2 2 2 2M53 4.500l2 2-2 2" stroke="#888" fill="none" />
                <path d="M67 6h10v7H67z" fill="#c4c4c4" /><path d="M69 6V3.500a3 3 0 016 0V6" fill="none" stroke="#c4c4c4" strokeWidth="1.500" /><path d="M72 8v3" stroke="#444" strokeWidth="1.500" />
              </svg>
              <Gap $w={27} /><Fit w={14}>Fill:</Fit><Gap $w={6} />
              <Percent><PercentValue><Fit w={25}>100%</Fit></PercentValue><PercentDrop><Down /></PercentDrop></Percent>
            </ControlRow>
            <LayerArea>
              <LayerList>{layers.map((l) => <Layer key={l[0]} row={l} />)}</LayerList>
              <ScrollY $w={15}>
                <svg width="7" height="12" fill="#ddd"><path d="M1 9h5L3.500 6z" /></svg>
                <Thumb $w={13} $h={26} $m="6px 0 229px" />
                <svg width="7" height="12" fill="#ddd"><path d="M1 4h5L3.500 7z" /></svg>
              </ScrollY>
            </LayerArea>
            <PanelFoot>
              <FootIcon><svg width="15" height="10" fill="none" stroke="#888" strokeWidth="1.500"><path d="M6 2H4a3 3 0 000 6h2M9 2h2a3 3 0 010 6H9M4 5h7" /></svg></FootIcon>
              <FootIcon><Fx>fx</Fx><svg width="3" height="17"><path d="M0 13h2v2H0z" fill="#ddd" /></svg></FootIcon>
              <FootIcon><svg width="13" height="11"><path d="M0 0h13v11H0z" fill={G} /><circle cx="6.500" cy="5.500" r="3" fill="#535353" /></svg></FootIcon>
              <FootIcon><svg width="17" height="12"><circle cx="5.500" cy="5.500" r="5" fill={G} /><path d="M2 9l7-7c3 3-2 9-7 7z" fill="#666" /><path d="M14 10h1.500v1.500H14z" fill="#ddd" /></svg></FootIcon>
              <FootIcon><svg width="13" height="11"><path d="M0 0h5l1 1.500h7V11H0z" fill={G} /></svg></FootIcon>
              <FootIcon><svg width="12" height="12"><path d="M1 1h10v11H6V6H1z" fill={G} /><path d="M1 7h4v4z" fill="#eee" /></svg></FootIcon>
              <FootIcon><svg width="12" height="12" fill="none" stroke={G}><path d="M1 2.500h10M4 2V.500h4V2M2 4.500l.5 7h7l.5-7zM4.500 5v6M7.500 5v6" /></svg></FootIcon>
            </PanelFoot>
          </Panel>
        </Panels>
      </Work>

      <TaskBar>
        <Start>
          <svg width="38" height="38">
            <defs><radialGradient id="orb" cy=".85"><stop stopColor="#41c6f0" /><stop offset=".55" stopColor="#1c66a3" /><stop offset="1" stopColor="#12406f" /></radialGradient></defs>
            <circle cx="19" cy="19" r="18" fill="url(#orb)" stroke="#264e73" /><path d="M3 15C7-1 31-1 35 15c-10-4-22-4-32 0z" fill="#fff" opacity=".35" />
            <path d="M10 10c3-2 5-2 8-1l-2 8c-3-1-5-1-8 1z" fill="#ee6a2d" /><path d="M20 10c3 1 5 1 8-1l-2 8c-3 2-5 2-8 1z" fill="#8cc63f" />
            <path d="M7.500 20c3-2 5-2 8-1l-2 8c-3-1-5-1-8 1z" fill="#3fa0e4" /><path d="M17.500 20c3 1 5 1 8-1l-2 8c-3 2-5 2-8 1z" fill="#fcc828" />
          </svg>
        </Start>
        {tasks.map(([n, open, stack]) => <Task key={n} $open={open} $stack={stack} $busy={n === "dw"}>{taskIcons[n]}</Task>)}
        <Tray>
          <svg width="32" height="32"><circle cx="16" cy="16" r="15" fill="#101f44" stroke="#1e88cf" strokeWidth="2" /><path d="M10.500 12c0-7 11-7 11-.5 0 4-5 4.500-5 8.500" fill="none" stroke="#fff" strokeWidth="3.600" /><circle cx="16.300" cy="25" r="2.200" fill="#fff" /></svg>
          <Gap $w={11} />
          {trayIcons.map((icon, i) => <TrayIcon key={i}>{icon}</TrayIcon>)}
          <Clock><Fit w={50}>11:58 AM</Fit><Fit w={58}>01/02/2017</Fit></Clock>
          <ShowDesktop />
        </Tray>
      </TaskBar>
    </Screen>
  );
}
